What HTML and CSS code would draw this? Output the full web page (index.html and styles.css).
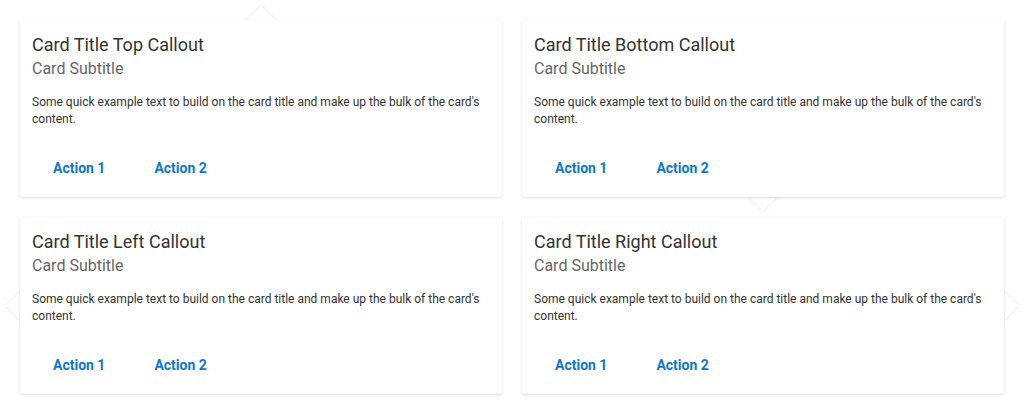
FILE: index.html
```html
<!DOCTYPE html>
<html>
<head>
<meta charset="utf-8">
<link rel="stylesheet" href="styles.css">
</head>
<body>
<div class="grid">
  <div class="card callout-top">
    <div class="title">Card Title Top Callout</div>
    <div class="subtitle">Card Subtitle</div>
    <p class="text">Some quick example text to build on the card title and make up the bulk of the card's content.</p>
    <div class="actions"><button class="btn">Action 1</button><button class="btn">Action 2</button></div>
  </div>
  <div class="card callout-bottom">
    <div class="title">Card Title Bottom Callout</div>
    <div class="subtitle">Card Subtitle</div>
    <p class="text">Some quick example text to build on the card title and make up the bulk of the card's content.</p>
    <div class="actions"><button class="btn">Action 1</button><button class="btn">Action 2</button></div>
  </div>
  <div class="card callout-left">
    <div class="title">Card Title Left Callout</div>
    <div class="subtitle">Card Subtitle</div>
    <p class="text">Some quick example text to build on the card title and make up the bulk of the card's content.</p>
    <div class="actions"><button class="btn">Action 1</button><button class="btn">Action 2</button></div>
  </div>
  <div class="card callout-right">
    <div class="title">Card Title Right Callout</div>
    <div class="subtitle">Card Subtitle</div>
    <p class="text">Some quick example text to build on the card title and make up the bulk of the card's content.</p>
    <div class="actions"><button class="btn">Action 1</button><button class="btn">Action 2</button></div>
  </div>
</div>
</body>
</html>
```
FILE: styles.css
```css
html {
  background: #fff;
}
body {
  margin: 0;
  font-family: Roboto, "Liberation Sans", sans-serif;
}
.grid {
  display: grid;
  grid-template-columns: 1fr 1fr;
  gap: 20px;
  padding: 20px;
}
.card {
  position: relative;
  background: #fff;
  border-radius: 2px;
  box-shadow: 0 1px 3px rgba(0,0,0,0.13), 0 0 1px rgba(0,0,0,0.06);
  padding: 12px 12px 11px;
  height: 177px;
  box-sizing: border-box;
}
.card::before {
  content: "";
  position: absolute;
  width: 20px;
  height: 20px;
  background: #fff;
  transform: rotate(45deg);
  box-shadow: 0 0 3px rgba(0,0,0,0.14);
  z-index: -1;
}
.callout-top::before { top: -10px; left: calc(50% - 10px); }
.callout-bottom::before { bottom: -10px; left: calc(50% - 10px); }
.callout-left::before { left: -10px; top: calc(50% - 10px); }
.callout-right::before { right: -10px; top: calc(50% - 10px); }
.title {
  font-size: 18px;
  line-height: 26px;
  color: #333;
}
.subtitle {
  margin-top: 1px;
  font-size: 16px;
  line-height: 20px;
  color: #666;
}
.text {
  margin: 15px 0 0;
  font-size: 12px;
  line-height: 17px;
  color: #333;
}
.actions {
  display: flex;
  gap: 7px;
  margin-top: 22px;
}
.btn {
  height: 36px;
  padding: 0 21px;
  border: 0;
  background: transparent;
  font-family: Roboto, "Liberation Sans", sans-serif;
  font-size: 14px;
  font-weight: 700;
  color: #0b78d0;
}
```
